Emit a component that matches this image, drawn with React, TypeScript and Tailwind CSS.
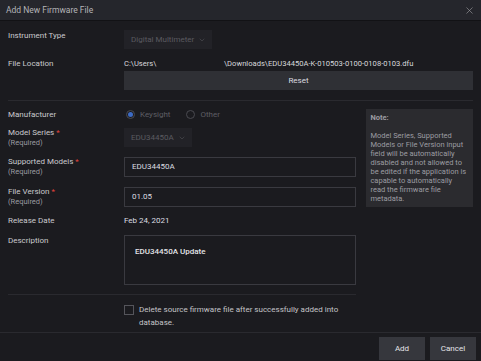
import { ChevronDown, X } from 'lucide-react'

const noteLines = [
  'Model Series, Supported',
  'Models or File Version input',
  'field will be automatically',
  'disabled and not allowed to',
  'be edited if the application is',
  'capable to automatically',
  'read the firmware file',
  'metadata.',
]

function Label({ text, required }: { text: string; required?: boolean }) {
  return (
    <div className="w-[116px] shrink-0 leading-[10px] text-[#cacace]">
      <div className="h-[10px] text-[8px]">
        {text}
        {required && <span className="ml-[2px] text-[#e0433c]">*</span>}
      </div>
      {required && <div className="h-[10px] text-[7.5px] text-[#9a9aa0]">(Required)</div>}
    </div>
  )
}

function Dropdown({ value, width }: { value: string; width: string }) {
  return (
    <div className={`flex h-[19px] items-center gap-[4px] whitespace-nowrap bg-[#222227] pl-[7px] text-[8px] text-[#5a5a60] ${width}`}>
      {value}
      <ChevronDown size={8} strokeWidth={1.5} />
    </div>
  )
}

export default function App() {
  return (
    <div className="flex h-[361px] w-[481px] flex-col overflow-hidden bg-[#1b1b1f] font-['Roboto',sans-serif]">
      <header className="flex h-[21px] shrink-0 items-center justify-between border-b border-[#121215] bg-[#25262c] pl-[6px] pr-[6px]">
        <span className="text-[8.5px] text-[#b4b4b8]">Add New Firmware File</span>
        <X size={11} strokeWidth={1.3} className="text-[#a0a0a4]" />
      </header>

      <div className="flex flex-col px-[8px]">
        <div className="mt-[9px] flex items-start">
          <div className="pt-[1px]"><Label text="Instrument Type" /></div>
          <Dropdown value="Digital Multimeter" width="w-[88px]" />
        </div>

        <div className="mt-[9px] flex items-start">
          <div className="pt-[1px]"><Label text="File Location" /></div>
          <div className="flex flex-1 flex-col">
            <div className="flex h-[12px] items-center whitespace-nowrap text-[7.6px] text-[#d8d8dc]">
              <span className="w-[100px]">C:\Users\</span>
              <span>\Downloads\EDU34450A-K-010503-0100-0108-0103.dfu</span>
            </div>
            <button className="mt-[1px] h-[19px] w-full bg-[#2f3035] text-[8px] text-[#dcdce0]">Reset</button>
          </div>
        </div>

        <div className="mt-[10px] h-px bg-[#2a2a2f]" />

        <div className="mt-[8px] flex items-start gap-[10px]">
          <div className="flex w-[350px] flex-col">
            <div className="flex h-[11px] items-center">
              <Label text="Manufacturer" />
              <div className="ml-[2px] flex items-center gap-[5px] text-[8px] text-[#5e5e64]">
                <span className="flex h-[9px] w-[9px] items-center justify-center rounded-full border border-[#4a4a50]">
                  <span className="h-[5px] w-[5px] rounded-full bg-[#3d6bc4]" />
                </span>
                <span>Keysight</span>
                <span className="ml-[11px] h-[9px] w-[9px] rounded-full border border-[#4a4a50]" />
                <span>Other</span>
              </div>
            </div>

            <div className="mt-[8px] flex items-start">
              <Label text="Model Series" required />
              <Dropdown value="EDU34450A" width="w-[68px]" />
            </div>

            <div className="mt-[9px] flex items-start">
              <Label text="Supported Models" required />
              <div className="flex h-[20px] flex-1 items-center border border-[#3a3a40] bg-[#1b1b1f] pl-[7px] text-[8px] text-[#dcdce0]">EDU34450A</div>
            </div>

            <div className="mt-[10px] flex items-start">
              <Label text="File Version" required />
              <div className="flex h-[20px] flex-1 items-center border border-[#3a3a40] bg-[#1b1b1f] pl-[7px] text-[8px] text-[#dcdce0]">01.05</div>
            </div>

            <div className="mt-[8px] flex h-[11px] items-center">
              <Label text="Release Date" />
              <span className="text-[8px] text-[#dcdce0]">Feb 24, 2021</span>
            </div>

            <div className="mt-[9px] flex items-start">
              <div className="pt-[1px]"><Label text="Description" /></div>
              <div className="h-[50px] flex-1 border border-[#3a3a40] px-[10px] pt-[10px] text-[8px] font-medium text-[#e4e4e8]">EDU34450A Update</div>
            </div>

            <div className="mt-[9px] h-px bg-[#2a2a2f]" />

            <div className="mt-[8px] flex items-start">
              <div className="w-[116px] shrink-0" />
              <span className="mt-[2px] h-[10px] w-[10px] shrink-0 border border-[#55555b]" />
              <span className="ml-[5px] whitespace-nowrap text-[8px] leading-[13px] text-[#c4c4c8]">
                Delete source firmware file after successfully added into
                <br />
                database.
              </span>
            </div>
          </div>

          <div className="w-[107px] bg-[#2b2b2f] px-[4px] pb-[4px] pt-[4px] text-[7.5px] leading-[9px] text-[#9c9ca2]">
            <div className="font-bold">Note:</div>
            <div className="mt-[9px] whitespace-nowrap">
              {noteLines.map(line => (
                <div key={line}>{line}</div>
              ))}
            </div>
          </div>
        </div>
      </div>

      <div className="mt-[3px] flex flex-1 items-start justify-end gap-[5px] border-t border-[#2a2a2f] pr-[5px] pt-[4px]">
        <button className="h-[23px] w-[46px] bg-[#36373d] text-[8px] text-[#e4e4e8]">Add</button>
        <button className="h-[23px] w-[46px] bg-[#36373d] text-[8px] text-[#e4e4e8]">Cancel</button>
      </div>
    </div>
  )
}
